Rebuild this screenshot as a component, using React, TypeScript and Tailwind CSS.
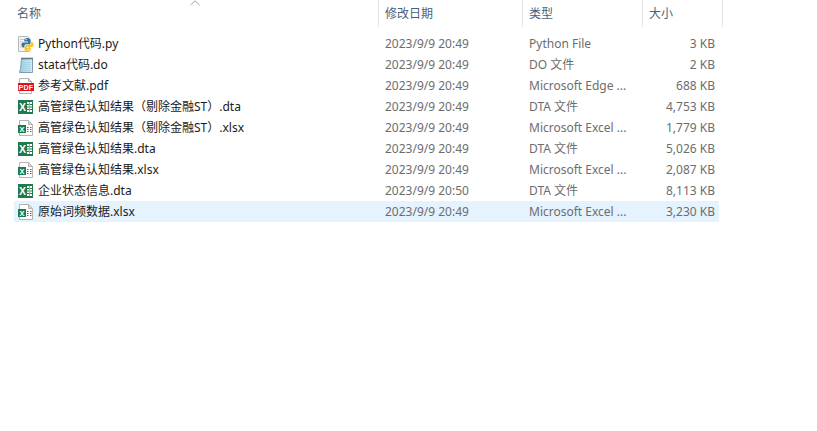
type FileKind = 'py' | 'do' | 'pdf' | 'dta' | 'xlsx';

type FileRow = {
  name: string;
  date: string;
  type: string;
  size: string;
  kind: FileKind;
  selected?: boolean;
};

const files: FileRow[] = [
  { name: 'Python代码.py', date: '2023/9/9 20:49', type: 'Python File', size: '3 KB', kind: 'py' },
  { name: 'stata代码.do', date: '2023/9/9 20:49', type: 'DO 文件', size: '2 KB', kind: 'do' },
  { name: '参考文献.pdf', date: '2023/9/9 20:49', type: 'Microsoft Edge ...', size: '688 KB', kind: 'pdf' },
  { name: '高管绿色认知结果（剔除金融ST）.dta', date: '2023/9/9 20:49', type: 'DTA 文件', size: '4,753 KB', kind: 'dta' },
  { name: '高管绿色认知结果（剔除金融ST）.xlsx', date: '2023/9/9 20:49', type: 'Microsoft Excel ...', size: '1,779 KB', kind: 'xlsx' },
  { name: '高管绿色认知结果.dta', date: '2023/9/9 20:49', type: 'DTA 文件', size: '5,026 KB', kind: 'dta' },
  { name: '高管绿色认知结果.xlsx', date: '2023/9/9 20:49', type: 'Microsoft Excel ...', size: '2,087 KB', kind: 'xlsx' },
  { name: '企业状态信息.dta', date: '2023/9/9 20:50', type: 'DTA 文件', size: '8,113 KB', kind: 'dta' },
  { name: '原始词频数据.xlsx', date: '2023/9/9 20:49', type: 'Microsoft Excel ...', size: '3,230 KB', kind: 'xlsx', selected: true },
];

const PageSheet = () => (
  <>
    <path d="M1.5 .5H10.5L14.5 4.5V15.5H1.5Z" fill="#fff" stroke="#b4b4b4" />
    <path d="M10.5 .5V4.5H14.5Z" fill="#dcdcdc" stroke="#b4b4b4" />
  </>
);

const PyIcon = () => (
  <svg width="16" height="16" viewBox="0 0 16 16">
    <path d="M.5 .5H9.5L11.5 2.5V15.5H.5Z" fill="#f4f4f4" stroke="#b8b8b8" />
    <path d="M2 3.5H8M2 6H5M2 8.5H4M2 11H4" stroke="#c8c8c8" />
    <path d="M9.5 2C7 2 6.3 3 6.3 4V5.6H10V6.4H5.4C4.2 6.4 3.6 7.6 3.6 9C3.6 10.4 4.2 11.4 5.3 11.4H6.4V9.9C6.4 8.9 7.2 8.3 8.2 8.3H10.8C11.8 8.3 12.6 7.5 12.6 6.6V4C12.6 3 11.6 2 9.5 2Z" fill="#3573a6" />
    <circle cx="8" cy="3.6" r=".7" fill="#fff" />
    <path d="M9.6 15.4C12 15.4 12.8 14.4 12.8 13.4V11.8H9.1V11H13.7C14.9 11 15.5 9.8 15.5 8.4C15.5 7 14.9 6 13.8 6H12.8V7.5C12.8 8.5 12 9.1 11 9.1H8.3C7.3 9.1 6.5 9.9 6.5 10.8V13.4C6.5 14.4 7.5 15.4 9.6 15.4Z" fill="#fdc62f" />
    <circle cx="11" cy="13.8" r=".7" fill="#fff" />
  </svg>
);

const DoIcon = () => (
  <svg width="16" height="16" viewBox="0 0 16 16">
    <defs>
      <linearGradient id="do-fill" x1="0" x2="1" y1="0" y2="0">
        <stop offset="0" stopColor="#8fd0e4" />
        <stop offset="1" stopColor="#d5ecf4" />
      </linearGradient>
    </defs>
    <path d="M3.5 1.5H14.5V15.5H1.5L2.5 12Z" fill="url(#do-fill)" stroke="#7f9dab" />
    <path d="M3.5 1.5H14.5" stroke="#4d5b63" strokeDasharray="1 1" strokeWidth="2" />
    <path d="M4 5.5H13M4 7.5H13M3.7 9.5H13M3.4 11.5H13M3 13.5H13" stroke="#a8d3e2" />
  </svg>
);

const PdfIcon = () => (
  <svg width="16" height="16" viewBox="0 0 16 16">
    <path d="M1.5 .5H10.5L13.5 3.5V15.5H1.5Z" fill="#fff" stroke="#b4b4b4" />
    <path d="M10.5 .5V3.5H13.5Z" fill="#dcdcdc" stroke="#b4b4b4" />
    <rect x="0" y="5" width="16" height="8" fill="#d8141e" />
    <text x="8" y="11.7" textAnchor="middle" fontSize="7" fontWeight="700" letterSpacing=".3" fill="#fff" fontFamily="'Liberation Sans', sans-serif">PDF</text>
  </svg>
);

const DtaIcon = () => (
  <svg width="16" height="16" viewBox="0 0 16 16">
    <rect x="0" y="1" width="15" height="14" fill="#1f7a4c" />
    <rect x="9" y="3" width="5" height="10" fill="#fff" />
    <path d="M9 5.5H14M9 8H14M9 10.5H14" stroke="#1f7a4c" />
    <path d="M11.5 3V13" stroke="#7fb79b" />
    <text x="4.6" y="12" textAnchor="middle" fontSize="10.5" fontWeight="700" fill="#fff" fontFamily="'Liberation Sans', sans-serif">X</text>
  </svg>
);

const XlsxIcon = () => (
  <svg width="16" height="16" viewBox="0 0 16 16">
    <PageSheet />
    <path d="M9 7.5H10.5M12 7.5H13.5M9 9.5H10.5M12 9.5H13.5M9 11.5H10.5M12 11.5H13.5" stroke="#2a8058" />
    <rect x="0" y="5" width="8" height="8" fill="#1f7a4c" />
    <text x="4" y="11.6" textAnchor="middle" fontSize="7.5" fontWeight="700" fill="#fff" fontFamily="'Liberation Sans', sans-serif">X</text>
  </svg>
);

const icons = { py: PyIcon, do: DoIcon, pdf: PdfIcon, dta: DtaIcon, xlsx: XlsxIcon };

const Row = ({ file }: { file: FileRow }) => {
  const Icon = icons[file.kind];
  return (
    <div className={`flex h-[21px] w-[705px] items-center ${file.selected ? 'bg-[#e5f3ff]' : ''}`}>
      <div className="flex w-[371px] items-center gap-[4px] pl-[4px]">
        <Icon />
        <span className="whitespace-nowrap text-[#1a1a1a]">{file.name}</span>
      </div>
      <div className="w-[144px] whitespace-nowrap text-[#6d6d6d]">{file.date}</div>
      <div className="w-[120px] whitespace-nowrap text-[#6d6d6d]">{file.type}</div>
      <div className="w-[66px] whitespace-nowrap text-right text-[#6d6d6d]">{file.size}</div>
    </div>
  );
};

export default function App() {
  return (
    <div className="h-[431px] w-[817px] overflow-hidden bg-white font-['Noto_Sans','Noto_Sans_CJK_SC',sans-serif] text-[12px]">
      <div className="relative flex h-[27px] w-[723px] text-[#4c607a]">
        <svg className="absolute left-[190px] top-0" width="10" height="6" viewBox="0 0 10 6">
          <path d="M.5 5L5 .8L9.5 5" fill="none" stroke="#a0a0a0" />
        </svg>
        <div className="flex w-[378px] items-center pl-[17px]">名称</div>
        <div className="flex w-[144px] items-center border-l border-[#e5e5e5] pl-[6px]">修改日期</div>
        <div className="flex w-[120px] items-center border-l border-[#e5e5e5] pl-[6px]">类型</div>
        <div className="flex w-[81px] items-center border-x border-[#e5e5e5] pl-[6px]">大小</div>
      </div>
      <div className="flex flex-col pl-[14px] pt-[6px]">
        {files.map((file) => (
          <Row key={file.name} file={file} />
        ))}
      </div>
    </div>
  );
}
